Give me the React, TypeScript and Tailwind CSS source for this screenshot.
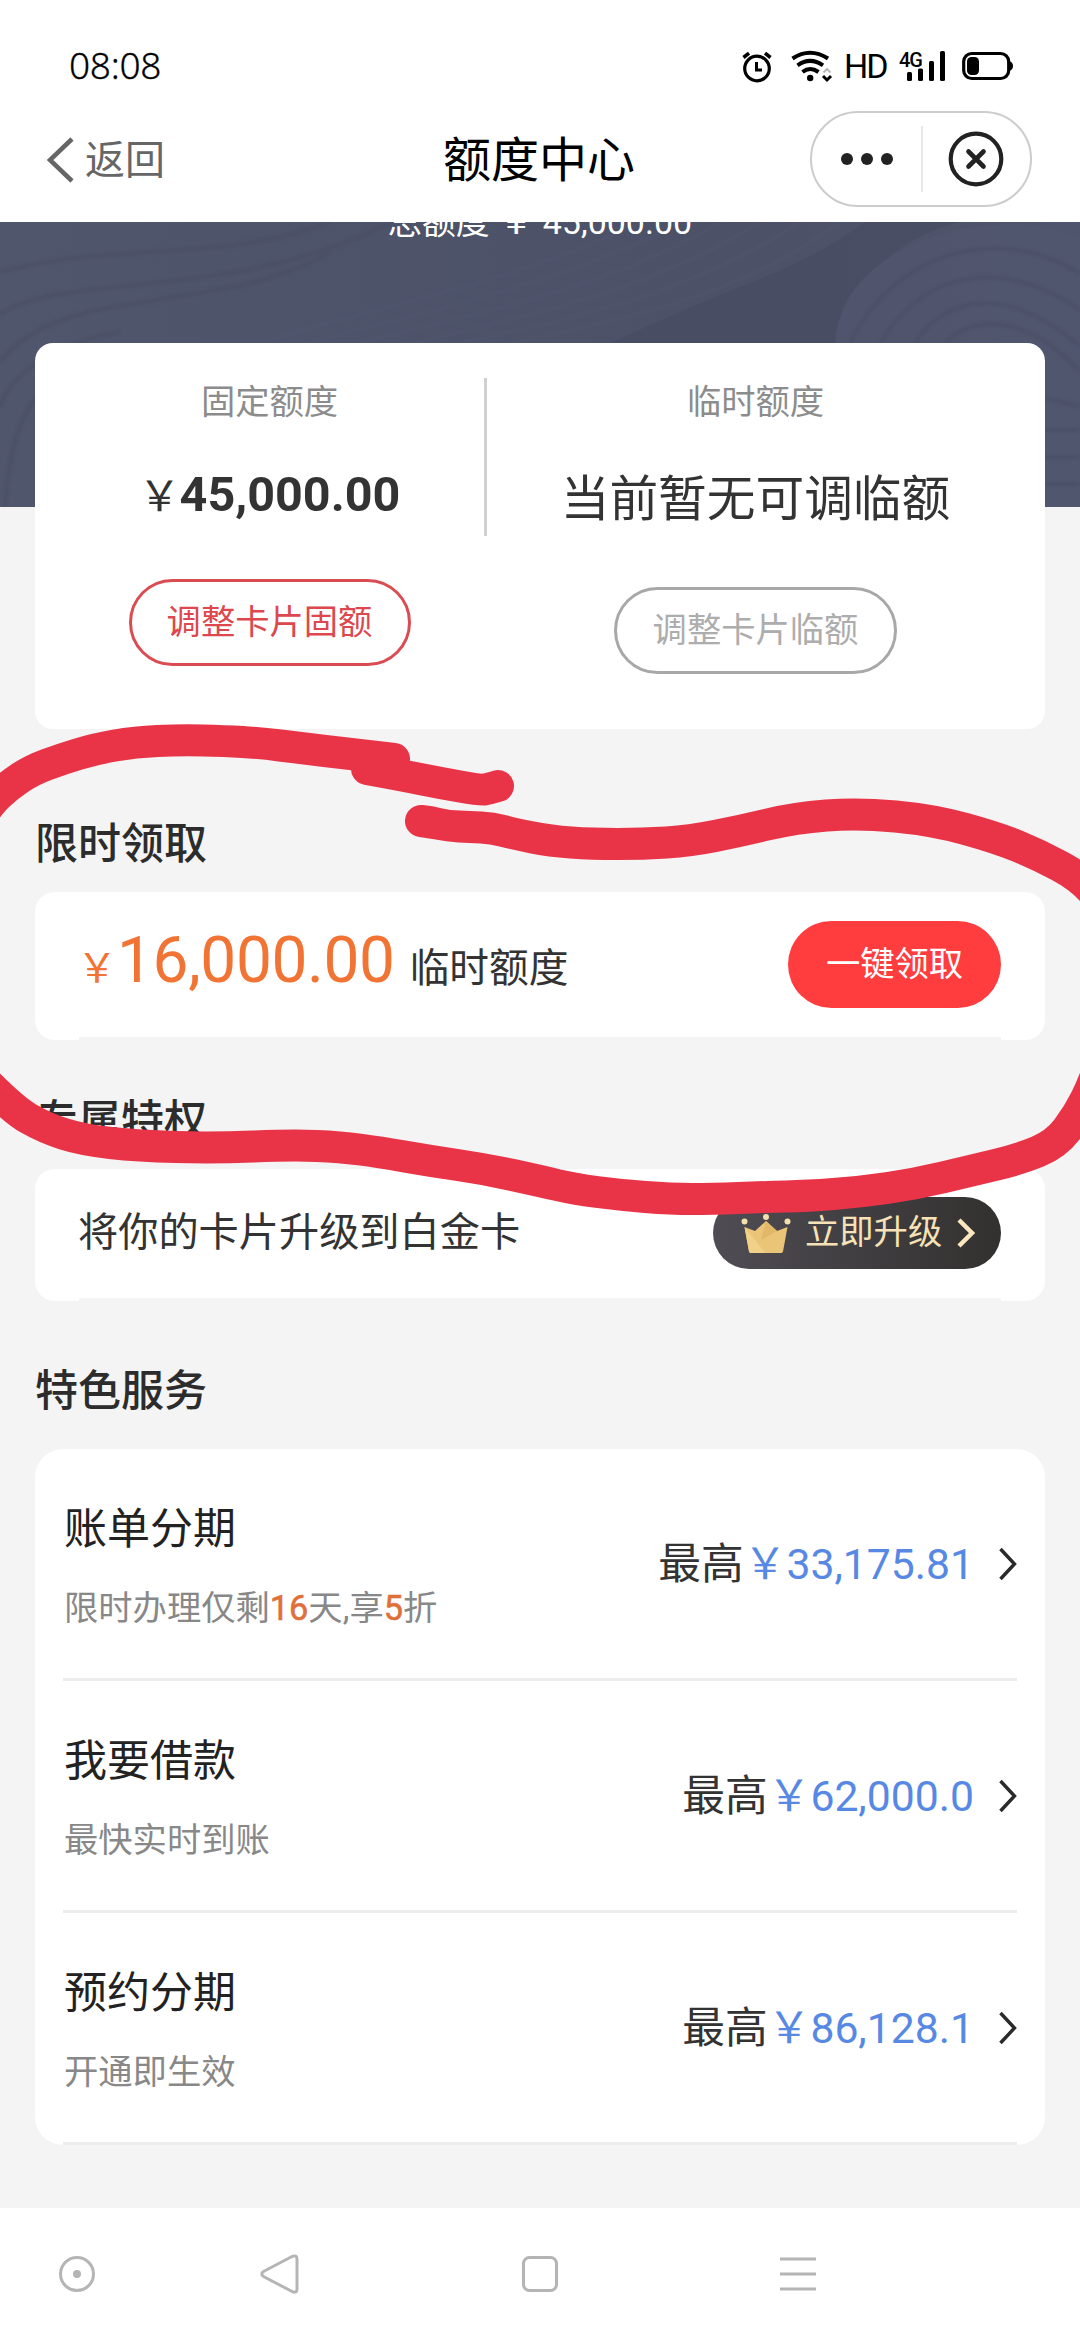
import type { ReactNode } from "react";

type Point = [number, number];

const services = [
    {
        title: "账单分期",
        desc: (
            <>
                限时办理仅剩<span className="text-[#e0703a] [-webkit-text-stroke:0.6px_#e0703a]">16</span>天,享
                <span className="text-[#e0703a] [-webkit-text-stroke:0.6px_#e0703a]">5</span>折
            </>
        ),
        amount: "33,175.81",
    },
    { title: "我要借款", desc: "最快实时到账", amount: "62,000.0" },
    { title: "预约分期", desc: "开通即生效", amount: "86,128.1" },
];

// hand-drawn marker strokes, as centre-line points
const strokes: Point[][] = [
    [[-30, 832], [-12, 805], [8, 786], [32, 770], [62, 759], [95, 749], [135, 742], [180, 740], [225, 741], [260, 743], [300, 748], [350, 754], [394, 759]],
    [[367, 769], [400, 775], [440, 783], [480, 790], [488, 789], [498, 786]],
    [[421, 821], [430, 822], [448, 826], [470, 827], [492, 828], [515, 834], [550, 841], [592, 844], [643, 844], [690, 841], [740, 831], [795, 818], [858, 813], [933, 820], [998, 838], [1039, 855], [1080, 877], [1105, 905], [1118, 960], [1108, 1040], [1094, 1083], [1078, 1115], [1056, 1144], [1020, 1159], [970, 1171], [915, 1184], [860, 1192], [807, 1196], [765, 1197], [712, 1199], [671, 1199], [620, 1195], [574, 1189], [540, 1181], [485, 1169], [430, 1161], [379, 1152], [340, 1147], [293, 1145], [213, 1148], [138, 1146], [83, 1140], [45, 1128], [12, 1109], [-20, 1076]],
];

const smooth = (pts: Point[]) => {
    let d = `M${pts[0].join(" ")}`;
    for (let i = 1; i < pts.length - 1; i++) {
        const [x, y] = pts[i];
        const [nx, ny] = pts[i + 1];
        d += i === pts.length - 2 ? `Q${x} ${y} ${nx} ${ny}` : `Q${x} ${y} ${(x + nx) / 2} ${(y + ny) / 2}`;
    }
    return d;
};

const StatusBar = () => (
    <div className="flex h-[102px] items-end justify-between pl-[69px] pr-[67px]">
        <span className="mb-[17px] font-['Noto_Sans'] text-[37px] font-light leading-[40px] tracking-[-0.3px] text-black [-webkit-text-stroke:0.3px_#000]">08:08</span>
        <div className="mb-[18px] flex h-[36px] items-center">
            <svg className="h-9 w-[30px]" viewBox="0 0 30 36" fill="none" stroke="#000" strokeWidth="3.2">
                <circle cx="15" cy="20.5" r="12.3" />
                <path d="M14.5 14v8H20" strokeWidth="3" />
                <path d="M1.5 9.5 7 5.2M28.5 9.5 23 5.2" strokeWidth="3.6" />
            </svg>
            <svg className="ml-[19px] h-9 w-[42px]" viewBox="0 0 42 36" fill="none" stroke="#000" strokeWidth="4">
                <path d="M1.5 10.5Q19 -1 37 10.5" />
                <path d="M6.5 17.3Q19 8.5 32 17.3" />
                <path d="M11.5 24Q19 18 27.5 24" />
                <circle cx="19.2" cy="30" r="3.2" fill="#000" stroke="none" />
                <path d="m32.500 24.500 3.500-3.500 3.500 3.500" stroke="#bbb" strokeWidth="2.2" />
                <path d="m32 28 4 4 4-4" strokeWidth="3" />
            </svg>
            <span className="ml-[11px] w-[40px] whitespace-nowrap font-['Roboto'] text-[34px] leading-9 tracking-[-2px] text-black">HD</span>
            <div className="relative ml-[16px] h-9 w-[46px]">
                <span className="absolute -left-px top-[2px] font-['Roboto'] text-[20px] font-medium leading-none tracking-[-1px] text-black">4G</span>
                <svg className="h-9 w-[46px]" viewBox="0 0 46 36">
                    <rect x="7" y="24" width="5" height="9" rx="1.500" />
                    <rect x="18" y="20.500" width="5" height="12.500" rx="1.500" />
                    <rect x="29" y="13" width="5" height="20" rx="1.500" />
                    <rect x="40" y="3" width="5" height="30" rx="1.500" />
                </svg>
            </div>
            <svg className="ml-[16px] h-9 w-[51px]" viewBox="0 0 51 36">
                <rect x="1.700" y="5.500" width="45" height="25" rx="8" fill="none" stroke="#000" strokeWidth="3.200" />
                <rect x="5" y="9" width="12" height="18" rx="4.500" />
                <path d="M47 13q4 1 4 5t-4 5z" />
            </svg>
        </div>
    </div>
);

const NavBar = () => (
    <header className="flex h-[120px] items-start justify-between pl-[46px] pr-12">
        <div className="mt-[29px] flex w-[222px] items-center text-[#666]">
            <svg className="h-[56px] w-[28px]" viewBox="0 0 28 56" fill="none" stroke="currentColor" strokeWidth="4.500">
                <path d="M26 7 4 28l22 21" />
            </svg>
            <span className="ml-[11px] mt-[2px] text-[40px] leading-[56px]">返回</span>
        </div>
        <h1 className="mt-[27px] w-[192px] whitespace-nowrap text-[48px] leading-[64px] text-black">额度中心</h1>
        <div className="mt-[9px] flex h-24 w-[222px] items-center rounded-full border-2 border-[#ccc]">
            <div className="flex w-[109px] items-center justify-center gap-2 pb-0.500">
                <i className="size-3 rounded-full bg-[#222]" />
                <i className="size-3 rounded-full bg-[#222]" />
                <i className="size-3 rounded-full bg-[#222]" />
            </div>
            <div className="h-[66px] w-[2px] bg-[#e8e8e8]" />
            <svg className="ml-[25px] size-[56px]" viewBox="0 0 56 56" fill="none" stroke="#222" strokeWidth="4.200" strokeLinecap="round">
                <circle cx="28" cy="28" r="25.300" />
                <path d="m20.500 20.500 15 15m0-15-15 15" strokeWidth="4.600" />
            </svg>
        </div>
    </header>
);

const Banner = () => (
    <div className="relative h-[285px] overflow-hidden bg-[#4c5268]">
        <svg className="absolute inset-0 h-full w-full" viewBox="0 0 1080 285" fill="none">
            <defs>
                <linearGradient id="sheen" x1="0" y1="0" x2="1" y2="0">
                    <stop offset="0" stopColor="#50566c" />
                    <stop offset="0.35" stopColor="#4d5369" />
                    <stop offset="0.7" stopColor="#4c5167" />
                    <stop offset="1" stopColor="#4f556c" />
                </linearGradient>
                <filter id="soft">
                    <feGaussianBlur stdDeviation="1.5" />
                </filter>
            </defs>
            <path d="M0 0h1080v285H0z" fill="url(#sheen)" />
            <path d="M865 0C800 48 740 62 680 90L610 121H835C835 85 880 20 960 0z" fill="#474c61" opacity="0.75" />
            <path d="M836 121C836 50 920 4 1010 2q40 0 70 14v269h-92z" fill="#51576f" opacity="0.7" />
            <g stroke="#444a5f" strokeWidth="4" opacity="0.4" filter="url(#soft)">
                <path d="M0 50C110 20 230 40 330 0" />
                <path d="M0 92C60 50 240 80 390 0" />
                <path d="M0 140C60 60 220 95 330 30" />
                <path d="M0 185C10 150 60 120 120 110" />
                <path d="M5 285C10 220 20 190 50 160" />
                <path d="M850 121C900 20 1010 5 1080 52" />
                <path d="M880 121C930 40 1010 40 1080 88" />
                <path d="M915 121C950 65 1020 70 1080 125" />
                <path d="M945 121C975 90 1030 95 1080 150" />
                <path d="M1040 175 1080 184M1040 208h40M1040 235h40M1040 262h40" />
            </g>
            <g stroke="#585e7c" strokeWidth="3" opacity="0.22" filter="url(#soft)">
                <path d="M260 121C390 80 520 60 640 0" />
                <path d="M310 121C440 85 570 60 680 0" />
                <path d="M360 121C490 88 620 62 720 0" />
                <path d="M410 121C540 92 660 64 760 0" />
                <path d="M460 121C590 94 700 66 800 0" />
                <path d="M510 121C640 96 750 68 840 0" />
            </g>
        </svg>
        <p className="relative -mt-[22px] whitespace-pre text-center text-[34px] leading-[44px] text-white">总额度 <span className="text-[36px]">￥</span>{" "}45,000.00</p>
    </div>
);

const LimitCard = () => (
    <section className="relative mx-[35px] -mt-[164px] flex h-[386px] rounded-[18px] bg-white">
        <div className="flex w-[469px] flex-col items-center pt-[36px]">
            <span className="text-[34.300px] leading-[46px] text-[#8c8c8c]">固定额度</span>
            <div className="mt-[38px] flex h-[64px] items-baseline leading-[64px] text-[#333]">
                <span className="text-[42px]">￥</span>
                <span className="-ml-px text-[48.500px] font-bold">45,000.00</span>
            </div>
            <button className="mt-[52px] h-[87px] w-[282px] rounded-full border-3 border-[#d94d52] text-[34.300px] leading-none text-[#dc484e]">
                调整卡片固额
            </button>
        </div>
        <div className="-ml-[20px] mt-[35px] h-[158px] w-[3px] bg-[#d0d0d0]" />
        <div className="ml-[127px] flex w-[283px] flex-col items-center pt-[36px]">
            <span className="text-[34.300px] leading-[46px] text-[#8c8c8c]">临时额度</span>
            <span className="mt-[40px] whitespace-nowrap text-[48.700px] leading-[70px] text-[#333]">当前暂无可调临额</span>
            <button className="mt-[52px] h-[87px] w-[283px] rounded-full border-3 border-[#a8a8a8] text-[34.300px] leading-none text-[#adadad]">
                调整卡片临额
            </button>
        </div>
    </section>
);

const SectionTitle = ({ children }: { children: ReactNode }) => (
    <h2 className="relative top-[2px] ml-[35px] text-[43px] font-medium leading-[60px] text-[#2c2c2c]">{children}</h2>
);

const Chevron = () => (
    <svg className="h-9 w-[20px]" viewBox="0 0 20 36" fill="none" stroke="#2a2a2a" strokeWidth="3.400">
        <path d="m3.500 3 14 15-14 15" />
    </svg>
);

const Crown = () => (
    <svg className="h-[42px] w-[50px]" viewBox="0 0 50 42">
        <path d="M3.500 15 14 19 25 9l11 10 10.500-4-4.500 24.500Q41.500 41 40 41H10q-1.500 0-2-1.500z" fill="#eac578" />
        <path d="m25 9 11 10-16 9z" fill="#e2b868" />
        <path d="m3.500 15 21 26H10q-1.500 0-2-1.500z" fill="#f1d088" />
        <circle cx="3.500" cy="9.500" r="3" fill="#f4dfae" />
        <circle cx="25" cy="5" r="3" fill="#f4dfae" />
        <circle cx="46.500" cy="9.500" r="3" fill="#f4dfae" />
    </svg>
);

const SystemBar = () => (
    <footer className="h-[132px] bg-white pt-[45px]">
        <svg className="h-[42px] w-full" viewBox="0 0 1080 42" fill="none" stroke="#b5b5b5" strokeWidth="3">
            <circle cx="77" cy="21" r="16.500" />
            <circle cx="77" cy="21" r="4" fill="#b5b5b5" stroke="none" />
            <path d="M263.500 18.500 292 3.500Q297 1.500 297 6v30q0 4.500-5 2.500L263.500 23.500Q260 21 263.500 18.500z" />
            <rect x="523.500" y="4.500" width="33" height="33" rx="6" />
            <path d="M780 6h36M780 21h36M780 36h36" />
        </svg>
    </footer>
);

export default function App() {
    return (
        <div className="relative flex h-[2340px] w-[1080px] flex-col overflow-hidden bg-white font-['Roboto','Noto_Sans_CJK_SC',sans-serif]">
            <StatusBar />
            <NavBar />

            <main className="h-[1986px] overflow-hidden bg-[#f4f4f4]">
                <Banner />
                <LimitCard />

                <div className="mt-[83px]">
                    <SectionTitle>限时领取</SectionTitle>
                    <div className="mx-[35px] mt-[20px] h-[148px] rounded-[20px] bg-white px-[44px]">
                        <div className="flex h-full items-center justify-between border-b-3 border-[#f4f4f4]">
                            <div className="flex items-baseline leading-[80px]">
                                <span className="-ml-[2px] text-[40px] text-[#f27434]">￥</span>
                                <span className="text-[64px] tracking-[-0.4px] text-[#f27434]">16,000.00</span>
                                <span className="ml-[15px] text-[39.700px] text-[#333]">临时额度</span>
                            </div>
                            <button className="h-[87px] w-[213px] rounded-full bg-[#ff3d3f] text-[34.300px] text-white">一键领取</button>
                        </div>
                    </div>
                </div>

                <div className="mt-[49px]">
                    <SectionTitle>专属特权</SectionTitle>
                    <div className="mx-[35px] mt-[20px] h-[132px] rounded-[20px] bg-white px-[44px]">
                        <div className="flex h-full items-center justify-between border-b-3 border-[#f4f4f4]">
                            <span className="-ml-px text-[40.200px] text-[#333]">将你的卡片升级到白金卡</span>
                            <button className="-mt-px flex h-[72px] w-[288px] items-center rounded-full bg-linear-to-r from-[#504c54] to-[#32312f] pl-[28px] text-[34.300px] text-[#f6e2b6]">
                                <Crown />
                                <span className="ml-[14px]">立即升级</span>
                                <svg className="ml-[14px] h-8 w-5" viewBox="0 0 20 32" fill="none" stroke="#fae7bd" strokeWidth="4.500">
                                    <path d="m3 3 13 13L3 29" />
                                </svg>
                            </button>
                        </div>
                    </div>
                </div>

                <div className="mt-[58px]">
                    <SectionTitle>特色服务</SectionTitle>
                    <ul className="mx-[35px] mt-[30px] rounded-[28px] bg-white px-[28px]">
                        {services.map((item) => (
                            <li key={item.title} className="flex h-[232px] items-center justify-between border-b-3 border-[#ededed]">
                                <div className="flex flex-col pl-px pt-[3px]">
                                    <span className="text-[43px] leading-[60px] text-[#222]">{item.title}</span>
                                    <span className="mt-[26px] text-[34.300px] leading-[46px] text-[#888]">{item.desc}</span>
                                </div>
                                <div className="flex items-center pt-[2px] text-[42.700px] text-[#333]">
                                    最高<span className="text-[#5688e4]">￥{item.amount}</span>
                                    <span className="ml-[23px]">
                                        <Chevron />
                                    </span>
                                </div>
                            </li>
                        ))}
                    </ul>
                </div>
            </main>

            <SystemBar />

            <svg className="pointer-events-none absolute inset-0 h-full w-full" viewBox="0 0 1080 2340" fill="none" stroke="#e93448" strokeWidth="32" strokeLinecap="round" strokeLinejoin="round">
                {strokes.map((pts, i) => (
                    <path key={i} d={smooth(pts)} />
                ))}
            </svg>
        </div>
    );
}
